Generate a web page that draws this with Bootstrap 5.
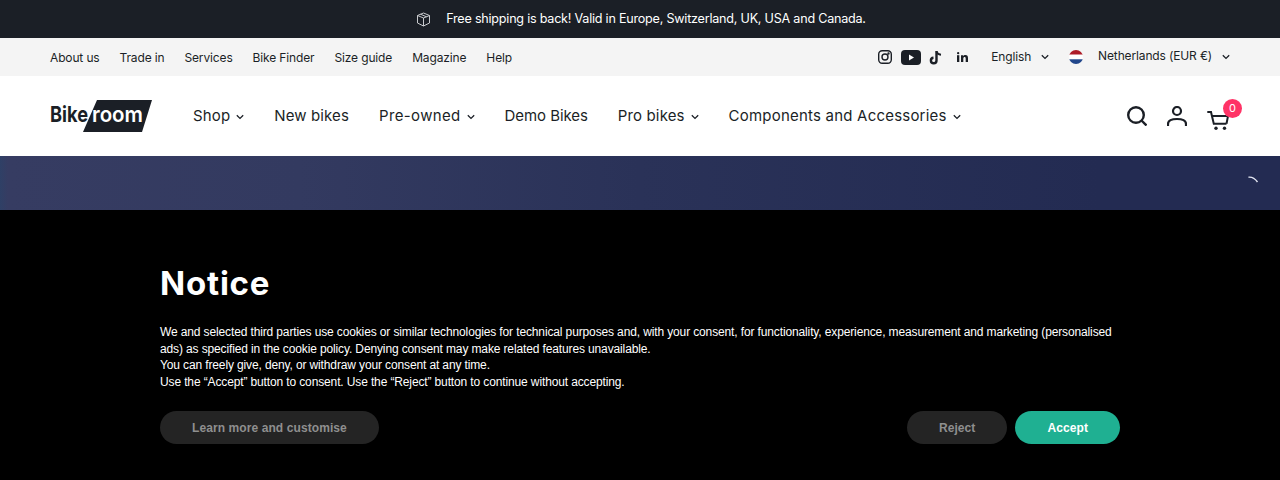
<!doctype html>
<html lang="en">
<head>
<meta charset="utf-8">
<title>Bikeroom</title>
<link href="https://cdn.jsdelivr.net/npm/bootstrap@5.3.0/dist/css/bootstrap.min.css" rel="stylesheet">
<style>
html,body{height:480px;overflow:hidden}
body{font-family:"Inter","Noto Sans",sans-serif;background:#000;color:#1b1f26}
a{color:inherit;text-decoration:none}
.promo-bar{height:38px;background:#1b1f26;color:#fff;font-size:12.6px;letter-spacing:-.23px;gap:15px;padding-left:2px}
.util-bar{height:38px;background:#f4f4f4;padding:0 50px;font-size:12px;letter-spacing:-.14px}
.util-links{gap:20px;padding-top:2px}
.main-bar{height:80px;background:#fff;padding:0 50px}
.main-links{margin-left:40px;gap:30px;font-size:15px;letter-spacing:.13px}
.nav-wide{letter-spacing:.35px}
.nav-wider{letter-spacing:.21px}
.nav-tight{letter-spacing:-.07px}
.chev{width:8px;height:6px;margin-left:6px}
.hero-strip{height:54px;background:linear-gradient(90deg,#2f4066 0,#363c62 8px,#333a60 300px,#2a3258 640px,#232b52 1100px);position:relative}
.spin-mark{position:absolute;left:1248px;top:20px}
.notice-panel{height:270px;background:#000;padding:53px 160px 0;color:#fff}
.notice-title{font-size:33px;font-weight:700;line-height:40px;margin:0 0 21px;letter-spacing:.8px;font-family:"Inter",sans-serif}
.notice-text{font-family:"Liberation Sans",sans-serif;font-size:12px;letter-spacing:-.13px;line-height:16.6px;margin:0 0 21px}
.cookie-btn{height:33px;border:0;border-radius:17px;background:#242424;color:#8f8f8f;font-family:"Liberation Sans",sans-serif;font-size:12px;font-weight:700;padding:0 32px;letter-spacing:.09px}
.cookie-accept{background:#1fb092;color:#fff}
.cart-count{position:absolute;left:16px;top:-7px;width:19px;height:19px;border-radius:50%;background:#ff3366;color:#fff;font-size:11px;line-height:19px;text-align:center}
.cart-wrap{position:relative;width:23px;height:20px}
</style>
</head>
<body>
<div class="promo-bar d-flex align-items-center justify-content-center">
<svg width="15" height="15" viewBox="0 0 15 15" fill="none" stroke="#c9cbce" stroke-width="1"><path d="M7.500 1 13.500 3.500V11L7.500 14 1.500 11V3.500Z M1.500 3.500 7.500 6 13.500 3.500 M7.500 6V14 M4.500 2.200 10.500 4.800"/></svg>
<span>Free shipping is back! Valid in Europe, Switzerland, UK, USA and Canada.</span>
</div>
<div class="util-bar d-flex align-items-center justify-content-between">
<nav class="d-flex util-links"><a href="#">About us</a><a href="#">Trade in</a><a href="#">Services</a><a href="#">Bike Finder</a><a href="#">Size guide</a><a href="#">Magazine</a><a href="#">Help</a></nav>
<div class="d-flex align-items-center">
<svg width="14" height="14" viewBox="0 0 14 14" fill="none" stroke="#1b1f26" stroke-width="1.400"><rect x=".7" y=".7" width="12.600" height="12.600" rx="3.500"/><circle cx="7" cy="7" r="3"/><circle cx="10.500" cy="3.500" r=".5" fill="#1b1f26"/></svg>
<svg style="margin-left:9px" width="20" height="15" viewBox="0 0 20 15"><rect width="20" height="15" rx="4" fill="#1b1f26"/><path d="M8 4.500 13 7.500 8 10.500Z" fill="#fff"/></svg>
<svg style="margin-left:8px" width="14" height="15" viewBox="0 0 14 15" fill="none" stroke="#1b1f26" stroke-width="2.400"><path d="M7.500 1V10.500A2.800 2.800 0 1 1 4.500 7.700"/><path d="M7.500 1.500C8 3.500 9.500 4.500 12 4.700" stroke-width="2"/></svg>
<svg style="margin-left:14px" width="11" height="10" viewBox="0 0 11 10" fill="#1b1f26"><rect y="3.200" width="2.300" height="6.800"/><circle cx="1.150" cy="1.150" r="1.150"/><path d="M4 3.200H6.200V4.200C6.600 3.500 7.400 3 8.400 3 10.300 3 11 4.200 11 6V10H8.700V6.500C8.700 5.600 8.400 5 7.600 5 6.800 5 6.300 5.600 6.300 6.500V10H4Z"/></svg>
<span style="margin-left:23px">English</span>
<svg class="chev" style="margin-left:10px" viewBox="0 0 8 6" fill="none" stroke="#1b1f26" stroke-width="1.300"><path d="M.8 1.200 4 4.400 7.200 1.200"/></svg>
<svg style="margin-left:20px" width="14" height="14" viewBox="0 0 14 14"><clipPath id="flagclip"><circle cx="7" cy="7" r="7"/></clipPath><g clip-path="url(#flagclip)"><rect width="14" height="4.700" fill="#ae1c28"/><rect y="4.700" width="14" height="4.600" fill="#fff"/><rect y="9.300" width="14" height="4.700" fill="#21468b"/></g></svg>
<span style="margin-left:15px;margin-top:-2px">Netherlands (EUR €)</span>
<svg class="chev" style="margin-left:10px" viewBox="0 0 8 6" fill="none" stroke="#1b1f26" stroke-width="1.300"><path d="M.8 1.200 4 4.400 7.200 1.200"/></svg>
</div>
</div>
<header class="main-bar d-flex align-items-center justify-content-between">
<div class="d-flex align-items-center">
<a href="#" class="d-flex" aria-label="Bikeroom">
<svg width="103" height="32" viewBox="0 0 103 32"><path d="M47 0H102L92 32H33Z" fill="#1b1f26"/><text x="0" y="22" font-family="Inter,sans-serif" font-size="22" font-weight="700" textLength="38" lengthAdjust="spacingAndGlyphs" fill="#1b1f26">Bike</text><text x="42" y="22" font-family="Inter,sans-serif" font-size="22" font-weight="600" textLength="51" lengthAdjust="spacingAndGlyphs" fill="#fff">room</text></svg>
</a>
<nav class="d-flex align-items-center main-links">
<a href="#">Shop<svg class="chev" viewBox="0 0 8 6" fill="none" stroke="#1b1f26" stroke-width="1.300"><path d="M.8 1.200 4 4.400 7.200 1.200"/></svg></a>
<a href="#">New bikes</a>
<a href="#" class="nav-wide">Pre-owned<svg class="chev" viewBox="0 0 8 6" fill="none" stroke="#1b1f26" stroke-width="1.300"><path d="M.8 1.200 4 4.400 7.200 1.200"/></svg></a>
<a href="#" class="nav-tight">Demo Bikes</a>
<a href="#">Pro bikes<svg class="chev" viewBox="0 0 8 6" fill="none" stroke="#1b1f26" stroke-width="1.300"><path d="M.8 1.200 4 4.400 7.200 1.200"/></svg></a>
<a href="#" class="nav-wider">Components and Accessories<svg class="chev" viewBox="0 0 8 6" fill="none" stroke="#1b1f26" stroke-width="1.300"><path d="M.8 1.200 4 4.400 7.200 1.200"/></svg></a>
</nav>
</div>
<div class="d-flex align-items-center" style="gap:20px">
<svg width="20" height="20" viewBox="0 0 20 20" fill="none" stroke="#1b1f26" stroke-width="2.400"><circle cx="9" cy="9" r="7.800"/><path d="M14.500 14.500 19.500 19.500"/></svg>
<svg width="20" height="20" viewBox="0 0 20 20" fill="none" stroke="#1b1f26" stroke-width="2.200"><circle cx="10" cy="5" r="4"/><path d="M1 20V18C1 14.500 5 13 10 13 15 13 19 14.500 19 18V20"/></svg>
<div class="cart-wrap">
<svg width="23" height="20" viewBox="0 0 23 20" fill="none" stroke="#1b1f26" stroke-width="2"><path d="M.3 1.900H4L6.800 13.700H19.500"/><path d="M5 6H21L19.500 13.700"/><circle cx="9" cy="18.300" r="1.700" fill="#1b1f26" stroke="none"/><circle cx="17.500" cy="18.300" r="1.700" fill="#1b1f26" stroke="none"/></svg>
<span class="cart-count">0</span>
</div>
</div>
</header>
<div class="hero-strip"><svg class="spin-mark" width="11" height="8" viewBox="0 0 11 8" fill="none" stroke="#e4e7f2" stroke-width="1.400"><path d="M.5 1.200C4 .8 7 2.500 9.500 6"/></svg></div>
<section class="notice-panel">
<h1 class="notice-title">Notice</h1>
<p class="notice-text">We and selected third parties use cookies or similar technologies for technical purposes and, with your consent, for functionality, experience, measurement and marketing (personalised ads) as specified in the cookie policy. Denying consent may make related features unavailable.<br>You can freely give, deny, or withdraw your consent at any time.<br>Use the “Accept” button to consent. Use the “Reject” button to continue without accepting.</p>
<div class="d-flex justify-content-between">
<button class="cookie-btn" type="button">Learn more and customise</button>
<div class="d-flex gap-2"><button class="cookie-btn" type="button">Reject</button><button class="cookie-btn cookie-accept" type="button">Accept</button></div>
</div>
</section>
<script src="https://cdn.jsdelivr.net/npm/bootstrap@5.3.0/dist/js/bootstrap.bundle.min.js"></script>
</body>
</html>
